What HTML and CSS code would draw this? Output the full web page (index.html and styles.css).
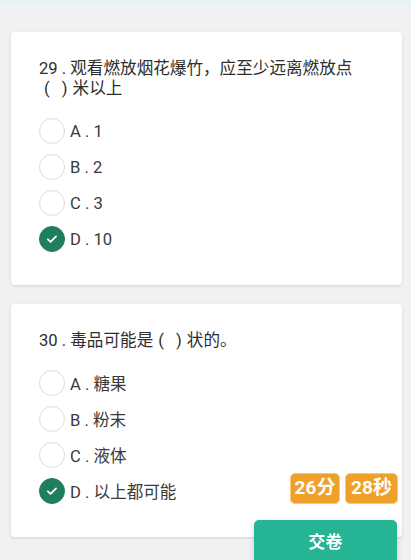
FILE: index.html
```html
<!DOCTYPE html>
<html lang="zh">
<head>
    <meta charset="UTF-8">
    <meta name="viewport" content="width=device-width, initial-scale=1.0">
    <title>答题</title>
    <link rel="stylesheet" href="styles.css">
</head>
<body>
    <div class="top-line"></div>

    <div class="list">
        <div class="card">
            <p class="question">29 . 观看燃放烟花爆竹，应至少远离燃放点<span class="blank">( )</span>米以上</p>
            <ul class="options">
                <li class="option"><span class="radio"></span>A . 1</li>
                <li class="option"><span class="radio"></span>B . 2</li>
                <li class="option"><span class="radio"></span>C . 3</li>
                <li class="option">
                    <span class="radio checked">
                        <svg viewBox="0 0 24 24" width="14" height="14"><path d="M5 12.5l4.5 4.5L19 7.5" fill="none" stroke="#fff" stroke-width="3" stroke-linecap="round" stroke-linejoin="round"/></svg>
                    </span>D . 10
                </li>
            </ul>
        </div>

        <div class="card">
            <p class="question">30 . 毒品可能是<span class="blank">( )</span>状的。</p>
            <ul class="options">
                <li class="option"><span class="radio"></span>A . 糖果</li>
                <li class="option"><span class="radio"></span>B . 粉末</li>
                <li class="option"><span class="radio"></span>C . 液体</li>
                <li class="option">
                    <span class="radio checked">
                        <svg viewBox="0 0 24 24" width="14" height="14"><path d="M5 12.5l4.5 4.5L19 7.5" fill="none" stroke="#fff" stroke-width="3" stroke-linecap="round" stroke-linejoin="round"/></svg>
                    </span>D . 以上都可能
                </li>
            </ul>
        </div>
    </div>

    <!-- 倒计时 + 交卷 -->
    <div class="timer">
        <span class="badge">26分</span>
        <span class="badge">28秒</span>
    </div>
    <button class="submit">交卷</button>
</body>
</html>
```

FILE: styles.css
```css
* {
    box-sizing: border-box;
    margin: 0;
    padding: 0;
}

body {
    background: #f1f1f4;
    font-family: Roboto, "Noto Sans CJK SC", sans-serif;
    color: #333;
    height: 560px;
    overflow: hidden;
}

.top-line {
    height: 3px;
    background: #e5f1f4;
}

.list {
    padding: 29px 9px 0 11px;
    display: flex;
    flex-direction: column;
    gap: 19px;
}

.card {
    background: #fff;
    border-radius: 4px;
    box-shadow: 0 1px 3px rgba(0, 0, 0, 0.12);
    padding: 27px 36px 28px 28px;
}

.question {
    font-size: 16.6px;
    line-height: 20px;
    margin-bottom: 14px;
    color: #2e2e2e;
}

.blank {
    display: inline-block;
    margin: 0 5px;
    word-spacing: 8px;
}

.options {
    list-style: none;
}

.option {
    display: flex;
    align-items: center;
    height: 36px;
    font-size: 16.6px;
    color: #3a3a3a;
}

.radio {
    width: 26px;
    height: 26px;
    border-radius: 50%;
    border: 1.5px solid #dcdcdc;
    margin-right: 5px;
    display: flex;
    align-items: center;
    justify-content: center;
    flex-shrink: 0;
}

.radio.checked {
    background: #1f7f5c;
    border-color: #1f7f5c;
}

.timer {
    position: fixed;
    left: 290px;
    top: 473px;
    display: flex;
    gap: 5px;
}

.badge {
    display: block;
    height: 31px;
    padding: 0 2px;
    line-height: 28px;
    background: #efa02a;
    border: 1.5px solid #f7c77a;
    border-radius: 5px;
    color: #fff;
    font-size: 19px;
    font-weight: 700;
    text-align: center;
}

.badge:first-child {
    width: 50px;
}

.badge:last-child {
    width: 53px;
}

.submit {
    position: fixed;
    left: 254px;
    top: 520px;
    width: 143px;
    height: 46px;
    background: #26b594;
    border: none;
    border-radius: 5px;
    color: #fff;
    font-family: "Noto Sans CJK SC", sans-serif;
    font-size: 17px;
    font-weight: 700;
    padding-bottom: 5px;
    box-shadow: 0 2px 6px rgba(0, 0, 0, 0.15);
}
```
